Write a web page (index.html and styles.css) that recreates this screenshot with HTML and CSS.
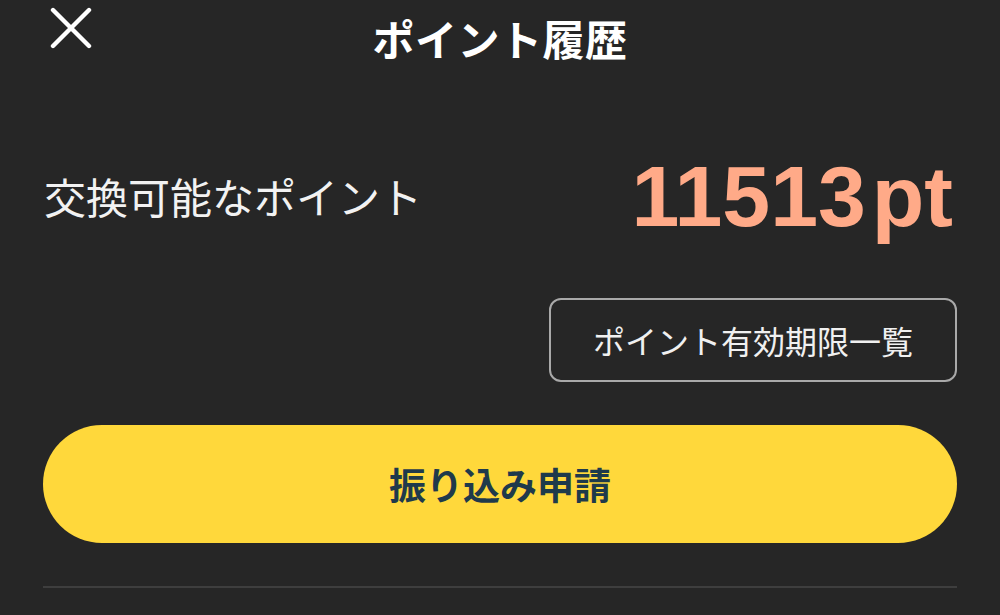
FILE: index.html
```html
<!DOCTYPE html>
<html lang="ja">
<head>
<meta charset="utf-8">
<title>ポイント履歴</title>
<link rel="stylesheet" href="styles.css">
</head>
<body>
<div class="page">
  <header class="header">
    <button class="close" aria-label="閉じる">
      <svg width="42" height="42" viewBox="0 0 42 42"><path d="M3 3 L39 39 M39 3 L3 39" stroke="#fff" stroke-width="4.4" stroke-linecap="round" fill="none"/></svg>
    </button>
    <h1 class="title">ポイント履歴</h1>
    <span class="spacer"></span>
  </header>
  <main class="content">
    <div class="points-row">
      <span class="points-label">交換可能なポイント</span>
      <span class="points-value"><span class="num">11513</span><span class="unit">pt</span></span>
    </div>
    <div class="expiry-wrap">
      <button class="expiry-btn">ポイント有効期限一覧</button>
    </div>
    <button class="transfer-btn">振り込み申請</button>
    <hr class="divider">
  </main>
</div>
</body>
</html>
```
FILE: styles.css
```css
html, body {
  margin: 0;
  padding: 0;
  background: #262626;
}
body {
  font-family: "Noto Sans CJK JP", "Noto Sans", sans-serif;
  color: #f2f2f2;
  width: 1000px;
  height: 615px;
  overflow: hidden;
}
.header {
  display: grid;
  grid-template-columns: 1fr auto 1fr;
  align-items: center;
  height: 75px;
  padding: 0 43px;
}
.close {
  justify-self: start;
  align-self: start;
  margin: 7px 0 0 7px;
  padding: 0;
  border: 0;
  background: none;
  width: 42px;
  height: 42px;
  display: block;
}
.close svg { display: block; }
.title {
  margin: 0;
  font-size: 42px;
  font-weight: 700;
  line-height: 75px;
  color: #ffffff;
  letter-spacing: 0.5px;
}
.content {
  padding: 0 43px;
}
.points-row {
  margin-top: 71px;
  height: 100px;
  display: flex;
  justify-content: space-between;
  align-items: center;
}
.points-label {
  font-size: 42px;
  line-height: 100px;
  font-weight: 400;
  color: #f2f2f2;
  margin-left: 1px;
}
.points-value {
  font-family: "Liberation Sans", Arial, sans-serif;
  font-weight: 700;
  font-size: 86px;
  line-height: 100px;
  color: #ffaa88;
  margin-right: 4px;
}
.unit {
  margin-left: 6px;
}
.expiry-wrap {
  display: flex;
  justify-content: flex-end;
  margin-top: 52px;
}
.expiry-btn {
  height: 84px;
  padding: 0 42px;
  border: 2px solid #a9a9a9;
  border-radius: 12px;
  background: transparent;
  color: #f0f0f0;
  font-family: "Noto Sans CJK JP", sans-serif;
  font-size: 32px;
  line-height: 80px;
}
.transfer-btn {
  display: block;
  width: 100%;
  height: 118px;
  margin-top: 43px;
  border: 0;
  border-radius: 59px;
  background: #ffd83b;
  color: #1f3a4b;
  font-family: "Noto Sans CJK JP", sans-serif;
  font-weight: 700;
  font-size: 37px;
  line-height: 118px;
  padding: 0;
}
.divider {
  margin: 43px 0 0;
  border: 0;
  height: 2px;
  background: #3e3e3e;
}
```
